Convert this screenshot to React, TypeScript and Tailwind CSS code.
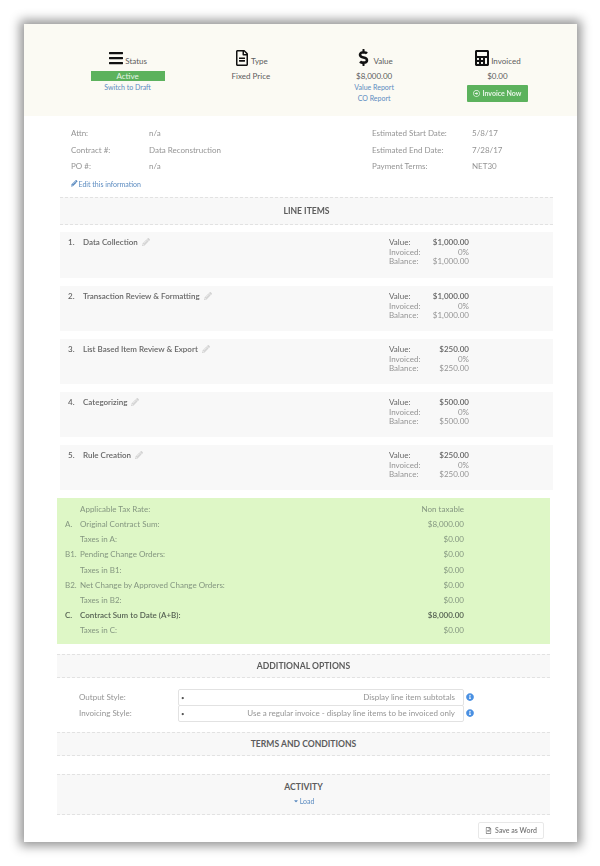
import { FaBars, FaRegFileAlt, FaDollarSign, FaCalculator, FaPencilAlt, FaRegArrowAltCircleRight, FaInfoCircle, FaCaretDown } from "react-icons/fa";

const items = [
  { n: "1.", name: "Data Collection", v: "$1,000.00", h: "h-[46px]" },
  { n: "2.", name: "Transaction Review & Formatting", v: "$1,000.00", h: "h-[45px]" },
  { n: "3.", name: "List Based Item Review & Export", v: "$250.00", h: "h-[45px]" },
  { n: "4.", name: "Categorizing", v: "$500.00", h: "h-[45px]" },
  { n: "5.", name: "Rule Creation", v: "$250.00", h: "h-[45px]" },
];

const green = [
  ["", "Applicable Tax Rate:", "Non taxable"],
  ["A.", "Original Contract Sum:", "$8,000.00"],
  ["", "Taxes in A:", "$0.00"],
  ["B1.", "Pending Change Orders:", "$0.00"],
  ["", "Taxes in B1:", "$0.00"],
  ["B2.", "Net Change by Approved Change Orders:", "$0.00"],
  ["", "Taxes in B2:", "$0.00"],
  ["C.", "Contract Sum to Date (A+B):", "$8,000.00"],
  ["", "Taxes in C:", "$0.00"],
];

function SectionHead({ title, className }: { title: string; className: string }) {
  return (
    <div className={`flex items-center justify-center bg-[#f8f8f8] border-y border-dashed border-[#e2e2e2] font-bold text-[8.6px] text-[#5c5c5c] ${className}`}>
      {title}
    </div>
  );
}

function InfoRow({ a, b, c, d }: { a: string; b: string; c: string; d: string }) {
  return (
    <div className="flex h-[16.5px] items-center text-[8px] text-[#949494]">
      <span className="w-[78px]">{a}</span>
      <span className="w-[223px]">{b}</span>
      <span className="w-[100px]">{c}</span>
      <span>{d}</span>
    </div>
  );
}

function SelectRow({ label, value }: { label: string; value: string }) {
  return (
    <div className="flex h-[16px] items-center text-[8px] text-[#949494]">
      <span className="w-[99px] shrink-0">{label}</span>
      <div className="flex h-[17px] w-[286px] items-center justify-between rounded-[2px] border border-[#e2e2e2] bg-white pl-[2px] pr-[8px]">
        <span className="text-[6px] text-[#555]">•</span>
        <span>{value}</span>
      </div>
      <FaInfoCircle className="ml-[2px] text-[8px] text-[#4a90e2]" />
    </div>
  );
}

export default function App() {
  return (
    <div className="h-[866px] w-[600px] overflow-hidden bg-white pl-[24px] pt-[24px] font-['Lato',sans-serif]">
      <div className="flex h-[818px] w-[553px] flex-col bg-white shadow-[0_0_10px_4px_rgba(0,0,0,0.42)] blur-[0.35px]">
        {/* Summary */}
        <div className="grid h-[92px] shrink-0 grid-cols-4 bg-[#fbfaf3] pl-[42px] pr-[18px] pt-[26px] text-center text-[8px] text-[#5c5c5c]">
          <div className="flex flex-col items-center">
            <div className="flex h-[16px] items-end gap-[1px]">
              <FaBars className="text-[16px] text-[#111]" />
              <span className="-mb-[1px]">Status</span>
            </div>
            <div className="mt-[5px] h-[10px] w-[74px] bg-[#5cb25d] text-[8px] leading-[10px] text-[#e6f4e6]">Active</div>
            <span className="mt-[1px] text-[7px] leading-[10px] text-[#5b8bc0]">Switch to Draft</span>
          </div>
          <div className="flex flex-col items-center">
            <div className="flex h-[16px] items-end gap-[1px]">
              <FaRegFileAlt className="text-[16px] text-[#111]" />
              <span className="-mb-[1px]">Type</span>
            </div>
            <span className="mt-[5px] leading-[10px]">Fixed Price</span>
          </div>
          <div className="flex flex-col items-center">
            <div className="flex h-[16px] items-end gap-[1px]">
              <FaDollarSign className="text-[17px] text-[#111]" />
              <span className="-mb-[1px]">Value</span>
            </div>
            <span className="mt-[5px] leading-[10px]">$8,000.00</span>
            <span className="mt-[1px] text-[7px] leading-[11px] text-[#5b8bc0]">Value Report</span>
            <span className="text-[7px] leading-[11px] text-[#5b8bc0]">CO Report</span>
          </div>
          <div className="flex flex-col items-center">
            <div className="flex h-[16px] items-end gap-[1px]">
              <FaCalculator className="text-[16px] text-[#111]" />
              <span className="-mb-[1px]">Invoiced</span>
            </div>
            <span className="mt-[5px] leading-[10px]">$0.00</span>
            <button className="mt-[4px] flex h-[17px] w-[61px] items-center justify-center gap-[2px] rounded-[1px] bg-[#5cb25d] text-[7px] font-bold text-[#e6f4e6]">
              <FaRegArrowAltCircleRight className="text-[7px]" />
              Invoice Now
            </button>
          </div>
        </div>

        {/* Information */}
        <div className="ml-[47px] h-[81px] shrink-0 pt-[9px]">
          <InfoRow a="Attn:" b="n/a" c="Estimated Start Date:" d="5/8/17" />
          <InfoRow a="Contract #:" b="Data Reconstruction" c="Estimated End Date:" d="7/28/17" />
          <InfoRow a="PO #:" b="n/a" c="Payment Terms:" d="NET30" />
          <div className="mt-[3px] flex items-center gap-[1px] text-[7px] leading-[12px] text-[#5b8bc0]">
            <FaPencilAlt className="text-[6.5px]" />
            Edit this information
          </div>
        </div>

        {/* Line items */}
        <div className="ml-[36px] mr-[24px] flex shrink-0 flex-col">
          <SectionHead title="LINE ITEMS" className="h-[28px] pt-[1px]" />
          <div className="mt-[7px] flex flex-col gap-[8px]">
            {items.map((it) => (
              <div key={it.n} className={`flex justify-between bg-[#f8f8f8] pl-[8px] pr-[84px] pt-[6px] ${it.h}`}>
                <div className="flex h-[8px] items-center text-[8px] font-semibold text-[#666]">
                  <span className="w-[15px] shrink-0">{it.n}</span>
                  <span>{it.name}</span>
                  <FaPencilAlt className="ml-[4px] text-[8px] text-[#d4d4d4]" />
                </div>
                <div className="w-[80px] text-[8px] leading-[9.5px] text-[#949494]">
                  <div className="flex justify-between font-semibold text-[#666]"><span className="font-normal">Value:</span><span>{it.v}</span></div>
                  <div className="flex justify-between"><span>Invoiced:</span><span>0%</span></div>
                  <div className="flex justify-between"><span>Balance:</span><span>{it.v}</span></div>
                </div>
              </div>
            ))}
          </div>
        </div>

        {/* Totals */}
        <div className="ml-[33px] mr-[27px] mt-[8px] h-[146px] shrink-0 bg-[#def7c6] pl-[8px] pr-[86px] pt-[3.5px] text-[8px] text-[#849680]">
          {green.map(([k, l, v]) => (
            <div key={l} className={`flex h-[15.15px] items-center ${k === "C." ? "font-semibold text-[#566253]" : ""}`}>
              <span className="w-[15px] shrink-0">{k}</span>
              <span className="flex-1">{l}</span>
              <span>{v}</span>
            </div>
          ))}
        </div>

        {/* Options */}
        <div className="ml-[33px] mr-[27px] flex shrink-0 flex-col">
          <SectionHead title="ADDITIONAL OPTIONS" className="mt-[10px] h-[24px]" />
          <div className="h-[54px] pl-[22px] pt-[11px]">
            <SelectRow label="Output Style:" value="Display line item subtotals" />
            <SelectRow label="Invoicing Style:" value="Use a regular invoice - display line items to be invoiced only" />
          </div>
          <SectionHead title="TERMS AND CONDITIONS" className="h-[24px]" />
          <div className="mt-[18px] flex h-[41px] flex-col items-center justify-center gap-[5px] border-y border-dashed border-[#e2e2e2] bg-[#f8f8f8] pb-[2px]">
            <span className="text-[8.6px] font-bold leading-[10px] text-[#5c5c5c]">ACTIVITY</span>
            <span className="flex items-center gap-[1px] text-[7px] leading-[8px] text-[#5b8bc0]">
              <FaCaretDown className="text-[6px]" />
              Load
            </span>
          </div>
          <div className="mt-[7px] flex justify-end pr-[6px]">
            <button className="flex h-[17px] w-[66px] items-center justify-center gap-[3px] rounded-[2px] border border-[#e8e8e8] bg-white text-[7px] font-semibold text-[#777]">
              <FaRegFileAlt className="text-[7px]" />
              Save as Word
            </button>
          </div>
        </div>
      </div>
    </div>
  );
}
